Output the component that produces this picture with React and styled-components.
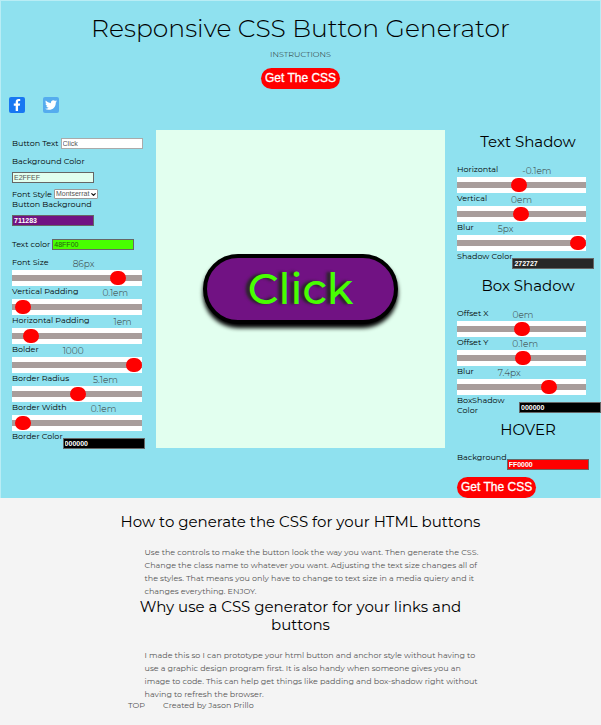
import React from "react";
import styled, { createGlobalStyle } from "styled-components";
import { FaFacebookF, FaTwitter } from "react-icons/fa";
import { ChevronDown } from "lucide-react";

const GlobalStyle = createGlobalStyle`
  *, *::before, *::after { box-sizing: border-box; }
  body {
    margin: 0;
    background: #f4f4f4;
    color: #111;
    font-family: Montserrat, Inter, sans-serif;
  }
`;

const Generator = styled.main`
  background: #8fe1ef;
  border: 1px solid #b9edf5;
  border-bottom: 0;
`;

const Header = styled.header`
  display: flex;
  flex-direction: column;
  align-items: center;
  padding-top: 10px;
`;

const Title = styled.h1`
  margin: 0;
  font-size: 25px;
  line-height: 34px;
  font-weight: 300;
  color: #000;
`;

const InstructionsLink = styled.a`
  margin: 3px 0 8px;
  font-size: 8px;
  line-height: 12px;
  font-weight: 300;
  color: #222;
  text-decoration: none;
`;

const CssButton = styled.button`
  display: block;
  height: 21px;
  padding: 0 4px;
  border: 0;
  border-radius: 11px;
  background: #f00;
  color: #fff;
  font: 12px/21px "Liberation Sans", Arial, sans-serif;
  -webkit-text-stroke: 0.3px #fff;
  white-space: nowrap;
`;

const Social = styled.nav`
  display: flex;
  gap: 18px;
  padding: 8px 8px 17px;
`;

const SocialLink = styled.a`
  display: flex;
  align-items: ${(p) => (p.$bottom ? "flex-end" : "center")};
  justify-content: center;
  width: 16px;
  height: 16px;
  padding-bottom: ${(p) => (p.$bottom ? "2px" : "0")};
  border-radius: 2px;
  background: ${(p) => p.$color};
  color: #fff;
  font-size: 12px;
`;

const Workspace = styled.div`
  display: grid;
  grid-template-columns: 155fr 289fr 155fr;
  align-items: start;
`;

const Controls = styled.section`
  min-width: 0;
  padding: 0 14px 0 ${(p) => (p.$side === "left" ? 11 : 12)}px;
`;

const Preview = styled.section`
  display: flex;
  align-items: center;
  justify-content: center;
  height: 318px;
  background: #e2ffef;
`;

const PreviewButton = styled.button`
  height: 70px;
  padding: 0 41px;
  border: 4px solid #000;
  border-radius: 36px;
  background: #711283;
  color: #48ff00;
  font: 500 43px/60px Montserrat, Inter, sans-serif;
  text-shadow: -4px 0 3px #272727;
  box-shadow: 0 4px 4px #000;
`;

const PanelTitle = styled.h2`
  margin: 0;
  padding-left: 13px;
  height: 34px;
  font-size: 15px;
  line-height: 23px;
  font-weight: 400;
  color: #000;
  text-align: center;
`;

const Label = styled.label`
  flex: none;
  width: ${(p) => (p.$wrap ? "62px" : "auto")};
  font-size: 8px;
  line-height: 10px;
  font-weight: 400;
  color: #000;
  white-space: ${(p) => (p.$wrap ? "normal" : "nowrap")};
`;

const InlineField = styled.div`
  display: flex;
  align-items: center;
  gap: 2px;
  height: ${(p) => p.$height}px;
  padding-top: ${(p) => p.$above || 0}px;
`;

const StackedField = styled.div`
  display: flex;
  flex-direction: column;
  align-items: flex-start;
  gap: 6px;
`;

const ColorField = styled.div`
  display: flex;
  align-items: flex-start;
  height: ${(p) => p.$height || 18}px;

  input { margin-top: 7px; }
`;

const TextInput = styled.input`
  flex: none;
  width: 82px;
  height: 11px;
  padding: 0 1px;
  border: 1px solid ${(p) => (p.$plain ? "#aaa" : "#666")};
  border-radius: 0;
  background: ${(p) => p.$fill || "#fff"};
  color: ${(p) => p.$ink || "#555"};
  font: ${(p) => (p.$bold ? 700 : 400)} 7px/9px "Liberation Sans", Arial, sans-serif;
`;

const SelectBox = styled.span`
  display: grid;
  align-items: center;
  width: 44px;

  > * { grid-area: 1 / 1; }

  svg {
    justify-self: end;
    margin-right: 1px;
    pointer-events: none;
  }
`;

const Select = styled.select`
  appearance: none;
  width: 100%;
  height: 10px;
  padding: 0 1px;
  border: 1px solid #999;
  border-radius: 1px;
  background: #fff;
  color: #555;
  font: 7px/8px "Liberation Sans", Arial, sans-serif;
`;

const SliderField = styled.div`
  height: 29px;
`;

const SliderHead = styled.div`
  display: flex;
  align-items: flex-start;
  gap: 24px;
  height: 13px;
`;

const Value = styled.output`
  font-size: 9px;
  line-height: 14px;
  font-weight: 300;
  color: #333;
`;

const Range = styled.input`
  appearance: none;
  display: block;
  width: 100%;
  height: 16px;
  margin: 0;
  background: linear-gradient(#fff 5px, #a89d9b 5px, #a89d9b 11px, #fff 11px);

  &::-webkit-slider-thumb {
    appearance: none;
    width: 16px;
    height: 14px;
    border-radius: 7px;
    background: #f00;
  }
`;

const About = styled.section`
  padding-top: 15px;
`;

const AboutTitle = styled.h2`
  max-width: 370px;
  margin: 0 auto;
  font-size: 15px;
  line-height: 18px;
  font-weight: 400;
  color: #000;
  text-align: center;
`;

const AboutText = styled.p`
  max-width: 360px;
  margin: 15px auto 0;
  padding-left: 24px;
  font-size: 8px;
  line-height: 13px;
  font-weight: 400;
  color: #555;
`;

const Footer = styled.footer`
  display: flex;
  gap: 18px;
  padding: 0 128px 14px;
  font-size: 8px;
  line-height: 8px;
  font-weight: 400;
  color: #555;

  a { color: inherit; text-decoration: none; }
`;

function Slider({ id, label, value, position }) {
  return (
    <SliderField>
      <SliderHead>
        <Label htmlFor={id}>{label}</Label>
        <Value htmlFor={id}>{value}</Value>
      </SliderHead>
      <Range id={id} type="range" min="0" max="1000" defaultValue={position} />
    </SliderField>
  );
}

export default function App() {
  return (
    <>
      <GlobalStyle />
      <Generator id="top">
        <Header>
          <Title>Responsive CSS Button Generator</Title>
          <InstructionsLink href="#instructions">INSTRUCTIONS</InstructionsLink>
          <CssButton type="button">Get The CSS</CssButton>
        </Header>
        <Social aria-label="Share">
          <SocialLink href="#facebook" aria-label="Facebook" $color="#1877f2" $bottom>
            <FaFacebookF />
          </SocialLink>
          <SocialLink href="#twitter" aria-label="Twitter" $color="#55acee">
            <FaTwitter />
          </SocialLink>
        </Social>
        <Workspace>
          <Controls $side="left">
            <InlineField $height={26}>
              <Label htmlFor="text">Button Text</Label>
              <TextInput id="text" defaultValue="Click" $plain />
            </InlineField>
            <StackedField>
              <Label htmlFor="page-color">Background Color</Label>
              <TextInput id="page-color" defaultValue="E2FFEF" $fill="#e2ffef" />
            </StackedField>
            <InlineField $height={16} $above={6}>
              <Label htmlFor="font">Font Style</Label>
              <SelectBox>
                <Select id="font" defaultValue="Montserrat">
                  <option>Montserrat</option>
                  <option>Arial</option>
                </Select>
                <ChevronDown size={7} strokeWidth={4} />
              </SelectBox>
            </InlineField>
            <StackedField>
              <Label htmlFor="button-color">Button Background</Label>
              <TextInput id="button-color" defaultValue="711283" $fill="#711283" $ink="#fff" $bold />
            </StackedField>
            <InlineField $height={31} $above={5}>
              <Label htmlFor="text-color">Text color</Label>
              <TextInput id="text-color" defaultValue="48FF00" $fill="#48ff00" $ink="#275c14" />
            </InlineField>
            <Slider id="size" label="Font Size" value="86px" position={860} />
            <Slider id="pad-y" label="Vertical Padding" value="0.1em" position={25} />
            <Slider id="pad-x" label="Horizontal Padding" value="1em" position={100} />
            <Slider id="bold" label="Bolder" value="1000" position={1000} />
            <Slider id="radius" label="Border Radius" value="5.1em" position={510} />
            <Slider id="border" label="Border Width" value="0.1em" position={25} />
            <ColorField>
              <Label htmlFor="border-color">Border Color</Label>
              <TextInput id="border-color" defaultValue="000000" $fill="#000" $ink="#fff" $bold />
            </ColorField>
          </Controls>
          <Preview>
            <PreviewButton type="button">Click</PreviewButton>
          </Preview>
          <Controls $side="right">
            <PanelTitle>Text Shadow</PanelTitle>
            <Slider id="text-x" label="Horizontal" value="-0.1em" position={482} />
            <Slider id="text-y" label="Vertical" value="0em" position={495} />
            <Slider id="text-blur" label="Blur" value="5px" position={1000} />
            <ColorField $height={23}>
              <Label htmlFor="shadow-color">Shadow Color</Label>
              <TextInput id="shadow-color" defaultValue="272727" $fill="#272727" $ink="#fff" $bold />
            </ColorField>
            <PanelTitle>Box Shadow</PanelTitle>
            <Slider id="box-x" label="Offset X" value="0em" position={500} />
            <Slider id="box-y" label="Offset Y" value="0.1em" position={510} />
            <Slider id="box-blur" label="Blur" value="7.4px" position={740} />
            <ColorField $height={23}>
              <Label htmlFor="box-color" $wrap>BoxShadow Color</Label>
              <TextInput id="box-color" defaultValue="000000" $fill="#000" $ink="#fff" $bold />
            </ColorField>
            <PanelTitle>HOVER</PanelTitle>
            <ColorField $height={25}>
              <Label htmlFor="hover-color">Background</Label>
              <TextInput id="hover-color" defaultValue="FF0000" $fill="#f00" $ink="#fff" $bold />
            </ColorField>
            <CssButton type="button">Get The CSS</CssButton>
          </Controls>
        </Workspace>
      </Generator>
      <About id="instructions">
        <AboutTitle>How to generate the CSS for your HTML buttons</AboutTitle>
        <AboutText>
          Use the controls to make the button look the way you want. Then generate the CSS.
          Change the class name to whatever you want. Adjusting the text size changes all of
          the styles. That means you only have to change to text size in a media quiery and it
          changes everything. ENJOY.
        </AboutText>
        <AboutTitle>Why use a CSS generator for your links and buttons</AboutTitle>
        <AboutText>
          I made this so I can prototype your html button and anchor style without having to
          use a graphic design program first. It is also handy when someone gives you an
          image to code. This can help get things like padding and box-shadow right without
          having to refresh the browser.
        </AboutText>
      </About>
      <Footer>
        <a href="#top">TOP</a>
        <span>Created by Jason Prillo</span>
      </Footer>
    </>
  );
}
